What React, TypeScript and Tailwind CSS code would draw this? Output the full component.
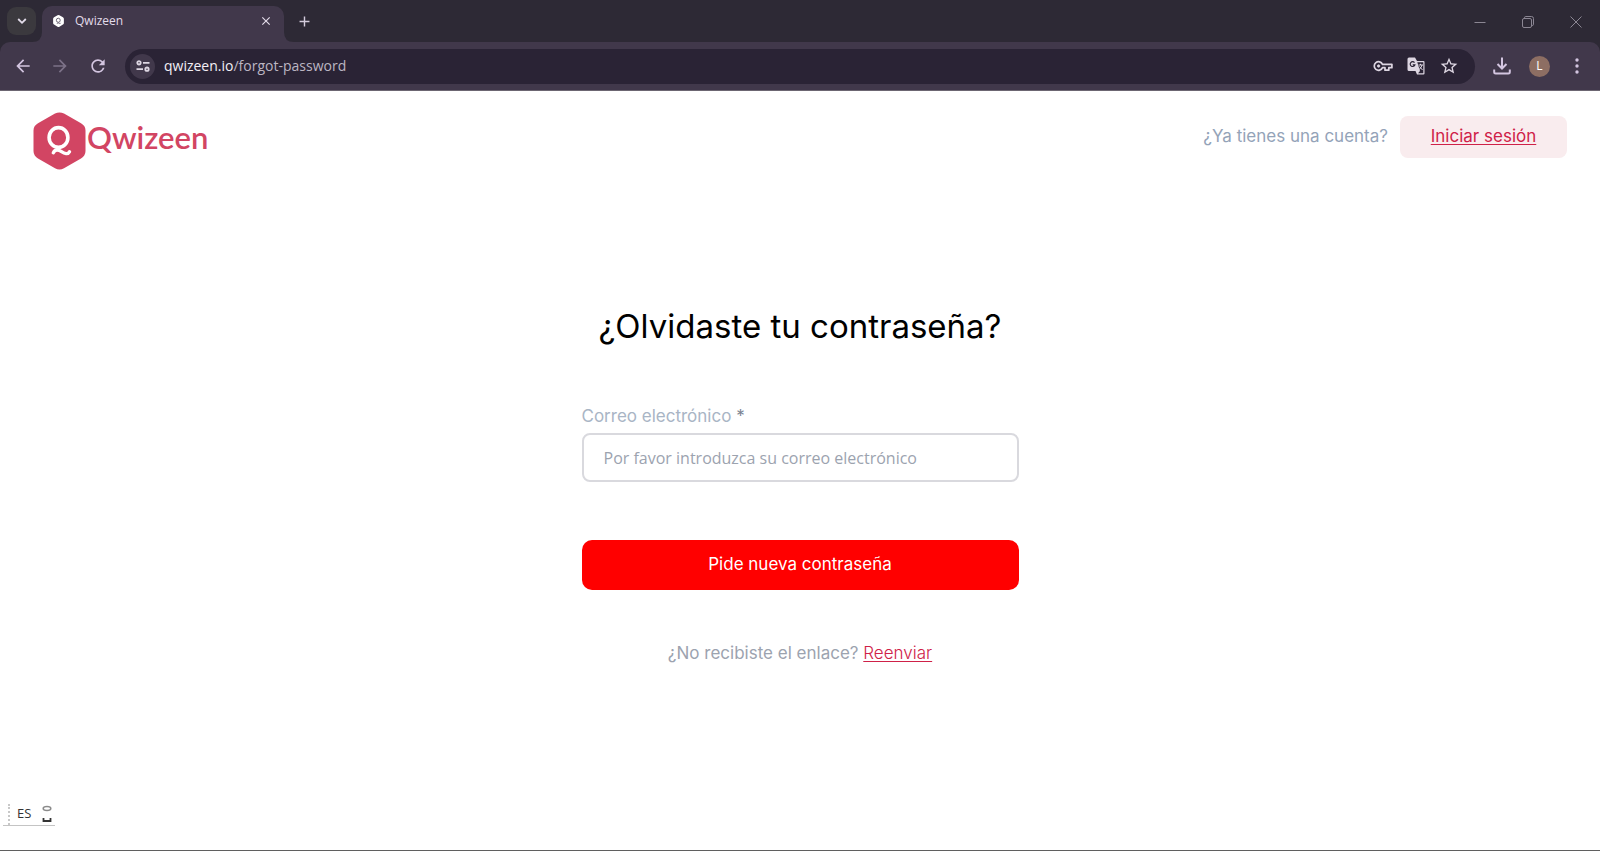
import React from "react";
import { MdArrowBack, MdArrowForward, MdRefresh, MdStarBorder, MdClose, MdAdd } from "react-icons/md";

const iconButton = "flex shrink-0 items-center justify-center rounded-full";

function HexMark({ className, fill, ink }: { className: string; fill: string; ink: string }) {
  return (
    <svg viewBox="0 0 52 58" className={className} aria-hidden="true">
      <path
        d="M21.5 1.6Q26 -0.8 30.500 1.600L47.500 11.200Q52 13.800 52 18.500V39Q52 43.800 47.500 46.400L30.500 56.200Q26 58.800 21.500 56.200L4.500 46.400Q0 43.800 0 39V18.500Q0 13.800 4.500 11.200Z"
        fill={fill}
      />
      <ellipse cx="25" cy="25.500" rx="9.400" ry="9.900" fill="none" stroke={ink} strokeWidth="3.600" />
      <path
        d="M19.800 40.800C21.500 36.800 25 37.600 28 39.600C31 41.600 34.500 42.800 36 39.800"
        fill="none"
        stroke={ink}
        strokeWidth="3.400"
        strokeLinecap="round"
      />
    </svg>
  );
}

function TabStrip() {
  return (
    <div className="flex h-[42px] items-end bg-[#2d2935] pl-[7px]">
      <button aria-label="Buscar pestañas" className="mb-[7px] flex h-7 w-[29px] items-center justify-center rounded-[9px] bg-[#3b393e] text-[#e3dcea]">
        <svg viewBox="0 0 10 10" className="size-[10px]" fill="none" stroke="currentColor" strokeWidth="1.800">
          <path d="M1.200 3L5 6.800L8.800 3" />
        </svg>
      </button>
      <div className="relative ml-[6px] flex h-9 w-[242px] items-center rounded-t-[10px] bg-[#41384b] px-[11px] pb-[6px] text-[#e3dcea]">
        <svg viewBox="0 0 10 10" className="absolute bottom-0 -left-[10px] size-[10px]" fill="#41384b" aria-hidden="true">
          <path d="M10 0Q10 10 0 10H10Z" />
        </svg>
        <svg viewBox="0 0 10 10" className="absolute -right-[10px] bottom-0 size-[10px]" fill="#41384b" aria-hidden="true">
          <path d="M0 0Q0 10 10 10H0Z" />
        </svg>
        <HexMark className="h-3 w-[11px]" fill="#ffffff" ink="#41384b" />
        <span className="ml-[11px] grow text-xs">Qwizeen</span>
        <button aria-label="Cerrar pestaña">
          <MdClose className="size-[14px]" />
        </button>
      </div>
      <button aria-label="Nueva pestaña" className="mb-[12px] ml-3 text-[#d3cbdc]">
        <MdAdd className="size-[17px]" />
      </button>
      <div className="mb-[14px] ml-auto flex items-center gap-9 pr-[18px] text-[#8b8693]">
        <button aria-label="Minimizar">
          <svg viewBox="0 0 12 12" className="size-3" stroke="currentColor">
            <path d="M0.500 6.500H11.500" />
          </svg>
        </button>
        <button aria-label="Restaurar">
          <svg viewBox="0 0 12 12" className="size-3" fill="none" stroke="currentColor">
            <rect x="0.500" y="2.500" width="9" height="9" rx="1.500" />
            <path d="M2.500 2.500V1.800Q2.500 0.500 3.800 0.500H9.500Q11.500 0.500 11.500 2.500V8.200Q11.500 9.500 10.200 9.500H9.500" />
          </svg>
        </button>
        <button aria-label="Cerrar">
          <svg viewBox="0 0 12 12" className="size-3" fill="none" stroke="currentColor">
            <path d="M0.500 0.500L11.500 11.500M11.500 0.500L0.500 11.500" />
          </svg>
        </button>
      </div>
    </div>
  );
}

function Toolbar() {
  return (
    <div className="bg-[#2d2935]">
      <div className="flex h-[49px] items-center rounded-t-[10px] border-b border-[#6c6672] bg-[#41384b] pr-[15px] pl-[13px] text-[#d3c5e0]">
        <button aria-label="Atrás" className={iconButton}>
          <MdArrowBack className="size-5" />
        </button>
        <button aria-label="Adelante" className={`${iconButton} ml-[17px] text-[#7c7288]`}>
          <MdArrowForward className="size-5" />
        </button>
        <button aria-label="Recargar" className={`${iconButton} ml-[18px]`}>
          <MdRefresh className="size-5" />
        </button>
        <div className="ml-[17px] flex h-[35px] grow items-center rounded-full bg-[#2a2335] pr-4 pl-[5px] text-[#ddd6e2]">
          <button aria-label="Información del sitio" className={`${iconButton} size-[25px] bg-[#41384b]`}>
            <svg viewBox="0 0 14 12" className="h-3 w-[14px]" fill="none" stroke="currentColor" strokeWidth="1.800">
              <circle cx="3" cy="2.800" r="1.700" />
              <path d="M7 2.800H13.500M0.500 9.200H7" />
              <circle cx="11" cy="9.200" r="1.700" />
            </svg>
          </button>
          <span className="ml-[9px] grow text-sm text-[#bcb6c3]">
            <span className="text-[#f3eff6]">qwizeen.io</span>/forgot-password
          </span>
          <div className="flex items-center gap-[14px]">
            <button aria-label="Contraseñas">
              <svg viewBox="0 0 20 12" className="h-3 w-5" fill="none" stroke="currentColor" strokeWidth="1.700">
                <path d="M9.500 4.300A4.300 4.300 0 1 0 9.500 7.700H12V10.200H15.800V7.700H18.900V4.300Z" strokeLinejoin="round" />
                <circle cx="5.600" cy="6" r="1.200" fill="currentColor" strokeWidth="0.800" />
              </svg>
            </button>
            <button aria-label="Traducir">
              <svg viewBox="0 0 18 18" className="size-[18px]" fill="none">
                <path d="M2 0.500H8L10 4H16.500Q17.500 4 17.500 5V16.500Q17.500 17.500 16.500 17.500H10L8.500 14H2Q0.500 14 0.500 12.500V2Q0.500 0.500 2 0.500Z" fill="currentColor" />
                <path d="M10.300 5.200H16.300V16.300H11L13 14Z" fill="#2a2335" />
                <path d="M7.500 5.600A2.400 2.400 0 1 0 7.900 7.800H5.700" stroke="#2a2335" strokeWidth="1.200" />
                <path d="M11.500 8H16M13.500 6.800V8M15 8Q14.500 11 12 12.500M12.500 9.500L15.500 13" stroke="currentColor" />
              </svg>
            </button>
            <button aria-label="Añadir a marcadores">
              <MdStarBorder className="size-5" />
            </button>
          </div>
        </div>
        <button aria-label="Descargas" className={`${iconButton} ml-[18px]`}>
          <svg viewBox="0 0 18 18" className="size-[18px]" fill="none" stroke="currentColor" strokeWidth="2">
            <path d="M9 0.500V11M4.500 7L9 11.500L13.500 7M1.200 12.500V15Q1.200 16.500 2.700 16.500H15.300Q16.800 16.500 16.800 15V12.500" />
          </svg>
        </button>
        <button aria-label="Perfil" className={`${iconButton} ml-[18px] size-[21px] bg-[#8d6e63] text-xs text-white`}>
          L
        </button>
        <button aria-label="Menú" className={`${iconButton} ml-[19px]`}>
          <svg viewBox="0 0 16 16" className="size-4" fill="currentColor">
            <circle cx="8" cy="2" r="1.700" />
            <circle cx="8" cy="8" r="1.700" />
            <circle cx="8" cy="14" r="1.700" />
          </svg>
        </button>
      </div>
    </div>
  );
}

export default function App() {
  return (
    <div className="flex min-h-screen flex-col border-b border-[#5f5f5f] bg-white font-['Open_Sans','Noto_Sans',sans-serif]">
      <TabStrip />
      <Toolbar />
      <header className="flex items-start justify-between px-[33px] pt-[21px] font-['Inter',sans-serif]">
        <a href="#" className="flex items-center gap-px text-[#d24563]">
          <HexMark className="h-[58px] w-[53px]" fill="#d24563" ink="#ffffff" />
          <span className="pb-2 font-['Lato',sans-serif] text-[31px] leading-9 font-semibold">Qwizeen</span>
        </a>
        <div className="mt-1 flex items-center gap-3">
          <span className="text-[17px] text-[#94a3b8]">¿Ya tienes una cuenta?</span>
          <a href="#" className="flex h-[42px] w-[167px] items-center justify-center rounded-lg bg-[#f9ecee] text-[17px] text-[#cf2148] underline underline-offset-2">
            Iniciar sesión
          </a>
        </div>
      </header>
      <main className="mx-auto mt-[136px] flex w-full max-w-[437px] flex-col font-['Inter',sans-serif]">
        <h1 className="text-center text-[33px] leading-10 whitespace-nowrap text-black">¿Olvidaste tu contraseña?</h1>
        <form className="mt-[58px] flex flex-col" onSubmit={(e) => e.preventDefault()}>
          <label htmlFor="email" className="text-[17px] leading-6 text-[#a9b5c5]">
            Correo electrónico <span className="text-[#7b8491]">*</span>
          </label>
          <input
            id="email"
            type="email"
            placeholder="Por favor introduzca su correo electrónico"
            className="mt-[5px] h-[49px] rounded-lg border-2 border-[#d9d9de] px-5 font-['Open_Sans','Noto_Sans',sans-serif] text-base outline-none placeholder:text-[#9ca3af]"
          />
          <button type="submit" className="mt-[58px] h-[50px] rounded-[10px] bg-[#ff0000] text-[17px] text-white">
            Pide nueva contraseña
          </button>
        </form>
        <p className="mt-[51px] text-center text-[17px] leading-6 text-[#9ca3af]">
          ¿No recibiste el enlace?{" "}
          <a href="#" className="font-light text-[#cf2148] underline underline-offset-2">
            Reenviar
          </a>
        </p>
      </main>
      <footer className="mt-auto mb-6 ml-[3px] flex h-[23px] w-[52px] items-center self-start border-b border-[#c4c4c4] pl-[5px] text-[13px] text-[#333333]">
        <span className="h-[21px] border-l-2 border-dotted border-[#c8c8c8]" />
        <span className="ml-[7px]">ES</span>
        <svg viewBox="0 0 10 18" className="ml-auto mr-[3px] h-[18px] w-[10px]" fill="none">
          <ellipse cx="5" cy="3.500" rx="3.800" ry="2" stroke="#8b8b8b" strokeWidth="1.500" />
          <path d="M1.500 13V16H8.500V13" stroke="#333333" strokeWidth="1.800" />
        </svg>
      </footer>
    </div>
  );
}
